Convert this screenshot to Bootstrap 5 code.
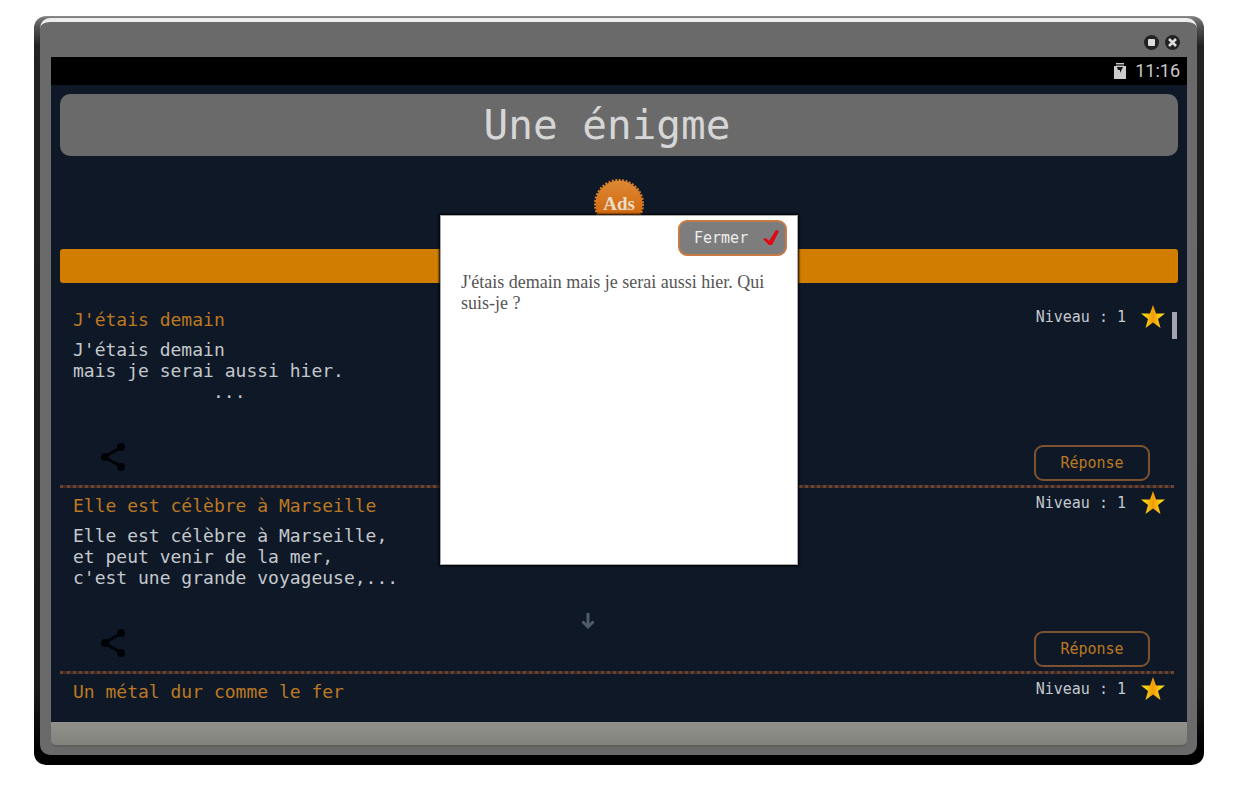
<!DOCTYPE html>
<html lang="fr">
<head>
<meta charset="utf-8">
<meta name="viewport" content="width=device-width, initial-scale=1">
<title>Une énigme</title>
<link href="https://cdn.jsdelivr.net/npm/bootstrap@5.3.0/dist/css/bootstrap.min.css" rel="stylesheet">
<style>
body { background: #fff; font-family: "DejaVu Sans Mono", monospace; color: #c4c8cc; }
.device { margin: 16px 33px 0 34px; padding: 2px 7px 10px 6px; border-radius: 12px;
  background: linear-gradient(#8e8e8e 0, #777 2px, #555 10px, #222 30px, #191919 90%, #000 98%); }
.bezel { background: #6a6a6a; border-top: 4px solid #eee; border-radius: 10px; padding: 0 10px 8px 11px; }
.window-bar { height: 35px; padding: 5px 6px 0 0; }
.win-btn, .share-btn { border: 0; background: none; padding: 0; line-height: 0; }
.status-bar { background: #000; height: 28px; padding-right: 7px; font: 18px/28px Roboto, sans-serif; color: #c8c8c8; }
.screen { background: #0e1827; padding: 9px 9px 0; }
.title-bar { background: #6a6a6a; border-radius: 10px; height: 62px; padding-right: 24px; font-size: 41px; line-height: 62px; color: #d6d6d6; }
.ads-row { height: 93px; padding-top: 22px; }
.orange-bar { background: #d17d00; height: 34px; border-radius: 3px; }
.riddles { padding-top: 19px; }
.riddle { height: 186px; padding-left: 13px; margin-right: 4px; border-bottom: 3px dotted #6b432f; background: linear-gradient(#3c2b29, #3c2b29) bottom / 100% 3px no-repeat border-box; }
.riddle-end { height: 48px; border-bottom: 0; background: none; }
.riddle-title { font-size: 18px; line-height: 24px; color: #bd7822; padding-top: 6px; margin: 0; }
.riddle-text { font-size: 18px; line-height: 21px; margin: 7px 0 0; }
.more { font-size: 18px; line-height: 21px; padding-left: 140px; }
.level { font-size: 15px; line-height: 30px; gap: 14px; padding-right: 8px; }
.riddle-actions { padding: 0 24px 1px 27px; }
.share-btn { padding-bottom: 12px; }
.answer { width: 116px; height: 36px; border: 2px solid #7e5230; border-radius: 9px; background: none; color: #bd7822; font-size: 15px; }
.thumb { top: 29px; right: 1px; width: 5px; height: 27px; background: #a5a3b2; }
.down { left: calc(50% - 38px); top: 329px; line-height: 0; }
.popup { top: 130px; left: 50%; transform: translateX(-50%); width: 358px; height: 350px; background: #fff; border: 1px solid #aaa; box-shadow: 0 0 2px 1px #000; color: #555; }
.close-btn { width: 109px; height: 36px; margin: 4px 10px 0 0; border: 2px solid #c67b45; border-radius: 9px; background: #7d7d7d; color: #eee; font-size: 15px; padding: 0 5px 0 14px; }
.popup-text { font: 18px/21px "Liberation Serif", serif; margin: 16px 20px; }
.dock { height: 25px; background: linear-gradient(#91918c, #83837e); border-bottom: 2px solid #5e5e5c; border-radius: 0 0 6px 6px; }
</style>
</head>
<body>
<main class="device">
  <div class="bezel">
    <div class="window-bar d-flex justify-content-end align-items-center gap-1">
      <button class="win-btn" aria-label="Agrandir"><svg width="17" height="17" viewBox="0 0 17 17"><circle cx="8.500" cy="8.500" r="7.500" fill="#222"/><rect x="5" y="5" width="7" height="7" rx="1" fill="#ddd"/></svg></button>
      <button class="win-btn" aria-label="Fermer la fenêtre"><svg width="17" height="17" viewBox="0 0 17 17"><circle cx="8.500" cy="8.500" r="7.500" fill="#222"/><path d="M5 5l7 7M12 5l-7 7" stroke="#ddd" stroke-width="2.600"/></svg></button>
    </div>
    <div class="status-bar d-flex justify-content-end align-items-center gap-2">
      <svg width="14" height="18" viewBox="0 0 14 18"><path d="M1 4h2V1h8v3h2v13H1z" fill="#ccc"/><path d="M3 4V2h8v2z" fill="#555"/><path d="M4 5h6L7 11V8H5z" fill="#111"/></svg>
      <span>11:16</span>
    </div>
    <div class="screen position-relative">
      <h1 class="title-bar text-center fw-normal mb-0">Une énigme</h1>
      <div class="ads-row text-center">
        <svg width="52" height="52" viewBox="0 0 52 52" role="img" aria-label="Ads">
          <defs><linearGradient id="seal" x1="0" y1="0" x2="0" y2="1"><stop offset="0" stop-color="#dc8935"/><stop offset="1" stop-color="#d05c00"/></linearGradient></defs>
          <circle cx="26" cy="26" r="23.500" fill="url(#seal)"/>
          <circle cx="26" cy="26" r="24" fill="none" stroke="#d87d22" stroke-width="2" stroke-dasharray="2 1.500"/>
          <text x="26" y="32" text-anchor="middle" font-family="Liberation Serif, serif" font-weight="bold" font-size="19" fill="#eadccb">Ads</text>
        </svg>
      </div>
      <div class="orange-bar"></div>
      <section class="riddles position-relative">
        <article class="riddle d-flex flex-column">
          <div class="d-flex justify-content-between">
            <h2 class="riddle-title">J'étais demain</h2>
            <div class="level d-flex align-items-center"><span>Niveau : 1</span><svg width="26" height="26" viewBox="0 0 26 26"><use href="#star"/></svg></div>
          </div>
          <p class="riddle-text">J'étais demain<br>mais je serai aussi hier.</p>
          <div class="more">...</div>
          <div class="riddle-actions d-flex justify-content-between align-items-center mt-auto">
            <button class="share-btn" aria-label="Partager"><svg width="26" height="30" viewBox="0 0 26 30"><use href="#share"/></svg></button>
            <button class="answer">Réponse</button>
          </div>
        </article>
        <article class="riddle d-flex flex-column">
          <div class="d-flex justify-content-between">
            <h2 class="riddle-title">Elle est célèbre à Marseille</h2>
            <div class="level d-flex align-items-center"><span>Niveau : 1</span><svg width="26" height="26" viewBox="0 0 26 26"><use href="#star"/></svg></div>
          </div>
          <p class="riddle-text">Elle est célèbre à Marseille,<br>et peut venir de la mer,<br>c'est une grande voyageuse,...</p>
          <div class="riddle-actions d-flex justify-content-between align-items-center mt-auto">
            <button class="share-btn" aria-label="Partager"><svg width="26" height="30" viewBox="0 0 26 30"><use href="#share"/></svg></button>
            <button class="answer">Réponse</button>
          </div>
        </article>
        <article class="riddle riddle-end">
          <div class="d-flex justify-content-between">
            <h2 class="riddle-title">Un métal dur comme le fer</h2>
            <div class="level d-flex align-items-center"><span>Niveau : 1</span><svg width="26" height="26" viewBox="0 0 26 26"><use href="#star"/></svg></div>
          </div>
        </article>
        <div class="thumb position-absolute"></div>
        <div class="down position-absolute"><svg width="14" height="18" viewBox="0 0 14 18"><path d="M7 1v14M1.500 9.500L7 15l5.500-5.500" fill="none" stroke="#4c5c6b" stroke-width="3"/></svg></div>
      </section>
      <div class="popup position-absolute" role="dialog" aria-label="Énigme">
        <div class="d-flex justify-content-end">
          <button class="close-btn d-flex align-items-center justify-content-between"><span>Fermer</span><svg width="18" height="20" viewBox="0 0 18 20"><path d="M1 11l3-1 3 3 7-11 3 1-7 14H7z" fill="#e30613"/></svg></button>
        </div>
        <p class="popup-text">J'étais demain mais je serai aussi hier. Qui suis-je ?</p>
      </div>
    </div>
    <div class="dock"></div>
  </div>
</main>
<svg width="0" height="0" class="position-absolute" aria-hidden="true">
  <defs>
    <linearGradient id="gold" x1="0" y1="0" x2="1" y2="0"><stop offset="0" stop-color="#ffe000"/><stop offset=".2" stop-color="#f8d010"/><stop offset=".5" stop-color="#f39a08"/><stop offset=".8" stop-color="#f8d010"/><stop offset="1" stop-color="#ffe21a"/></linearGradient>
    <path id="star" d="M13 1l3 8.500h9l-7 5.500 2.500 9L13 18.500 5.500 24 8 15 1 9.500h9z" fill="url(#gold)"/>
    <g id="share" fill="#000308"><path d="M22 5L4 15l18 10" fill="none" stroke="#000308" stroke-width="3"/><circle cx="21" cy="5" r="4"/><circle cx="5" cy="15" r="4"/><circle cx="21" cy="25" r="4"/></g>
  </defs>
</svg>
<script src="https://cdn.jsdelivr.net/npm/bootstrap@5.3.0/dist/js/bootstrap.bundle.min.js"></script>
</body>
</html>
